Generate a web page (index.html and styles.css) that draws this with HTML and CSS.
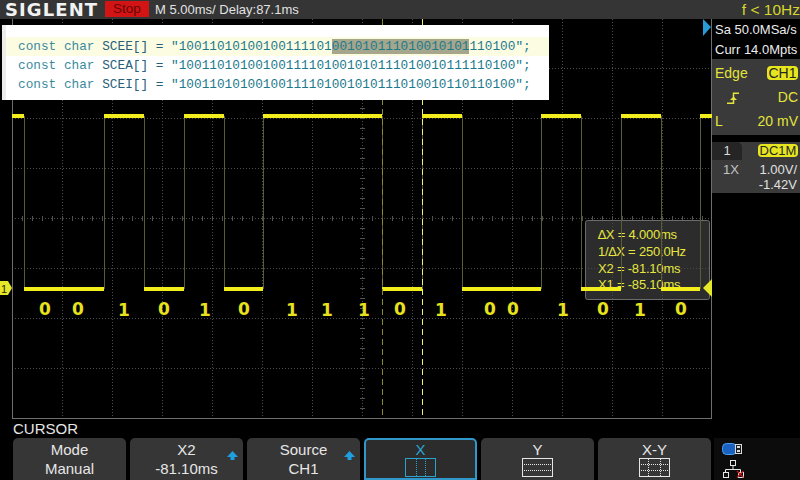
FILE: index.html
```html
<!DOCTYPE html>
<html>
<head>
<meta charset="utf-8">
<link rel="stylesheet" href="styles.css">
</head>
<body>
<div class="screen">
  <header class="topbar">
    <div class="logo">SIGLENT</div>
    <div class="stop">Stop</div>
    <div class="timebase">M 5.00ms/ Delay:87.1ms</div>
    <div class="freq">f &lt; 10Hz</div>
  </header>

  <div class="main">
    <div class="scope">
      <svg class="plot" width="712" height="400" viewBox="0 19 712 400" xmlns="http://www.w3.org/2000/svg">
        <g class="grid" fill="none">
          <path stroke="#4d4d4d" stroke-dasharray="1 2" d="M62.5 19V418M112.5 19V418M162.5 19V418M212.5 19V418M262.5 19V418M312.5 19V418M362.5 19V418M412.5 19V418M462.5 19V418M512.5 19V418M562.5 19V418M612.5 19V418M662.5 19V418"/>
          <path stroke="#4d4d4d" stroke-dasharray="1 2" d="M12 68.5H712M12 118.5H712M12 168.5H712M12 218.5H712M12 268.5H712M12 318.5H712M12 368.5H712"/>
          <path stroke="#525252" stroke-width="5" stroke-dasharray="1 9" d="M12 218.5H712"/>
          <path stroke="#525252" stroke-width="5" stroke-dasharray="1 9" d="M362.5 18V418"/>
          <path stroke="#6e6e6e" d="M12.5 19V418.5M12 418.5H712M711.5 19V418.5"/>
        </g>

        <rect x="585.5" y="220.5" width="124" height="79" rx="2" fill="#4a4a4a" fill-opacity="0.6" stroke="#6c6c6c"/>
        <g class="readout">
          <text x="598" y="239">∆X = 4.000ms</text>
          <text x="598" y="256">1/∆X = 250.0Hz</text>
          <text x="598" y="272.5">X2 = -81.10ms</text>
          <text x="598" y="289">X1 = -85.10ms</text>
        </g>

        <path fill="none" stroke="#5c5c34" d="M24.5 116V289M104.5 116V289M144.5 116V289M184.5 116V289M224.5 116V289M263.5 116V289M382.5 116V289M422.5 116V289M462.5 116V289M541.5 116V289M581.5 116V289M621.5 116V289M661.5 116V289M700.5 116V289"/>
        <path fill="none" stroke="#f2ee1e" stroke-width="4" d="M12 116H24M104 116H144M184 116H224M263 116H382M422 116H462M541 116H581M621 116H661M700 116H712M24 289H104M144 289H184M224 289H263M382 289H422M462 289H541M581 289H621M661 289H700"/>

        <path fill="none" stroke="#8a8a32" stroke-dasharray="6 4" d="M382.5 19V418"/>
        <path fill="none" stroke="#f0f070" stroke-dasharray="6 4" d="M422.5 19V418"/>

        <g class="bits">
          <text x="45" y="315">0</text>
          <text x="78" y="315">0</text>
          <text x="124" y="316">1</text>
          <text x="164" y="315">0</text>
          <text x="205" y="316">1</text>
          <text x="244" y="315">0</text>
          <text x="292" y="316">1</text>
          <text x="327" y="316">1</text>
          <text x="364" y="316">1</text>
          <text x="400" y="315">0</text>
          <text x="441" y="316">1</text>
          <text x="490" y="315">0</text>
          <text x="513" y="315">0</text>
          <text x="563" y="316">1</text>
          <text x="603" y="315">0</text>
          <text x="640" y="316">1</text>
          <text x="681" y="315">0</text>
        </g>

        <polygon points="0,281 8,281 12,288 8,295 0,295" fill="#e6e62a"/>
        <text class="gnd" x="1" y="292.5">1</text>
        <polygon points="703,288 712,279 712,297" fill="#e8e82a"/>
        <polygon points="703,19 711,27 703,36" fill="#2a9ad6"/>
      </svg>

      <div class="code">
        <div class="code-line current"><span class="kw">const char</span> <span class="id">SCEE[] =</span> <span class="str">"10011010100100111101<span class="sel">001010111010010101</span>110100";</span></div>
        <div class="code-line"><span class="kw">const char</span> <span class="id">SCEA[] =</span> <span class="str">"10011010100100111101001010111010010111110100";</span></div>
        <div class="code-line"><span class="kw">const char</span> <span class="id">SCEI[] =</span> <span class="str">"10011010100100111101001010111010010110110100";</span></div>
      </div>
    </div>

    <aside class="side">
      <div class="acq">
        <div>Sa 50.0MSa/s</div>
        <div>Curr 14.0Mpts</div>
      </div>
      <div class="trig">
        <div class="trig-row"><span>Edge</span><span class="badge ch">CH1</span></div>
        <div class="trig-row">
          <svg class="edge" width="12" height="12" viewBox="0 0 12 12"><path d="M0 11.25H6.5V1.25H12" fill="none" stroke="#e4e43c" stroke-width="1.5"/><polygon points="3,8 6.5,4.5 10,8" fill="#e4e43c"/></svg>
          <span>DC</span>
        </div>
        <div class="trig-row"><span>L</span><span>20 mV</span></div>
      </div>
      <div class="chan">
        <div class="chan-top"><span class="chan-num">1</span><span class="badge dc">DC1M</span></div>
        <div class="chan-row first"><span class="probe">1X</span><span>1.00V/</span></div>
        <div class="chan-row"><span></span><span>-1.42V</span></div>
      </div>
    </aside>
  </div>

  <footer class="bottom">
    <div class="menu">
      <div class="menu-title">CURSOR</div>
      <div class="buttons">
        <div class="btn"><div>Mode</div><div>Manual</div></div>
        <div class="btn"><div>X2</div><div>-81.10ms</div>
          <svg class="arrow" width="11" height="9" viewBox="0 0 11 9"><path d="M0 6L5.5 0L11 6H7.5V9H3.5V6Z" fill="#1e9fe0"/></svg>
        </div>
        <div class="btn"><div>Source</div><div>CH1</div>
          <svg class="arrow" width="11" height="9" viewBox="0 0 11 9"><path d="M0 6L5.5 0L11 6H7.5V9H3.5V6Z" fill="#1e9fe0"/></svg>
        </div>
        <div class="btn icon sel"><div class="glyph">X</div>
          <svg width="31" height="19" viewBox="0 0 31 19"><rect x="0.5" y="0.5" width="30" height="18" fill="none" stroke="#2aa3cf"/><path d="M11.5 1V18M20.5 1V18" stroke="#2aa3cf" stroke-dasharray="1 1"/></svg>
        </div>
        <div class="btn icon"><div class="glyph">Y</div>
          <svg width="31" height="19" viewBox="0 0 31 19"><rect x="0.5" y="0.5" width="30" height="18" fill="none" stroke="#e6e6e6"/><path d="M2 6.5H29M2 12.5H29" stroke="#e6e6e6" stroke-dasharray="1 1"/></svg>
        </div>
        <div class="btn icon"><div class="glyph">X-Y</div>
          <svg width="31" height="19" viewBox="0 0 31 19"><rect x="0.5" y="0.5" width="30" height="18" fill="none" stroke="#e6e6e6"/><path d="M9.5 1V18M21.5 1V18M2 6.5H29M2 12.5H29" stroke="#e6e6e6" stroke-dasharray="1 1"/></svg>
        </div>
      </div>
    </div>
    <div class="status">
      <svg width="20" height="12" viewBox="0 0 20 12"><rect x="0.5" y="0.5" width="14" height="11" rx="4" fill="#1b62c0" stroke="#4b9df0"/><rect x="13.5" y="1.5" width="6" height="9" fill="#1c1c1c" stroke="#dcdcdc"/><rect x="15" y="3" width="3" height="2" fill="#dcdcdc"/><rect x="15" y="7" width="3" height="2" fill="#dcdcdc"/></svg>
      <svg width="22" height="18" viewBox="0 0 22 18"><g fill="none" stroke="#e6e6e6"><rect x="8.5" y="0.5" width="5" height="5"/><path d="M11 6V9.5M3.5 9.5H18.5M3.5 9.5V12M18.5 9.5V12"/><rect x="1.5" y="12.5" width="5" height="5"/><rect x="16.5" y="12.5" width="5" height="5"/></g><path d="M15 11L21.5 17.5M21.5 11L15 17.5" stroke="#c41a1a" stroke-width="1.3"/></svg>
    </div>
  </footer>
</div>
</body>
</html>
```

FILE: styles.css
```css
* {
  box-sizing: border-box;
  margin: 0;
  padding: 0;
}

html, body {
  width: 800px;
  height: 480px;
  background: #000;
  overflow: hidden;
}

body {
  font-family: "Liberation Sans", Arial, sans-serif;
  color: #e6e6e6;
}

.screen {
  width: 800px;
  height: 480px;
  display: flex;
  flex-direction: column;
  background: #000;
}

/* ---------- top bar ---------- */
.topbar {
  height: 19px;
  flex: none;
  background: #353535;
  display: flex;
  align-items: flex-start;
  font-size: 13px;
  line-height: 19px;
}

.logo {
  width: 95px;
  margin-left: 5px;
  height: 19px;
  line-height: 20px;
  font-family: "DejaVu Sans", sans-serif;
  font-weight: bold;
  font-size: 18px;
  letter-spacing: 1.1px;
  color: #f2f2f2;
  white-space: nowrap;
}

.stop {
  width: 44px;
  height: 16px;
  margin-top: 1px;
  margin-left: 5px;
  line-height: 16px;
  text-align: center;
  background: #d31414;
  color: #6a0505;
  font-size: 13.5px;
}

.timebase {
  margin-left: 6px;
  color: #e2e2e2;
  white-space: nowrap;
}

.freq {
  margin-left: auto;
  color: #d6d62c;
  font-size: 15.5px;
  white-space: nowrap;
}

/* ---------- main area ---------- */
.main {
  display: flex;
  height: 400px;
  flex: none;
}

.scope {
  position: relative;
  width: 712px;
  height: 400px;
  flex: none;
}

.plot {
  display: block;
}

.readout text {
  font-family: "Liberation Sans", "DejaVu Sans", sans-serif;
  font-size: 13px;
  letter-spacing: -0.2px;
  fill: #e6e640;
}

.bits text {
  font-family: "DejaVu Sans", sans-serif;
  font-weight: bold;
  font-size: 17px;
  fill: #e8e21e;
  text-anchor: middle;
}

.gnd {
  font-family: "Liberation Sans", sans-serif;
  font-size: 11px;
  fill: #2a2a00;
}

/* code overlay */
.code {
  position: absolute;
  left: 2px;
  top: 6px;
  width: 547px;
  height: 75px;
  background: #ffffff;
  border-left: 4px solid #ececec;
  padding-top: 12px;
  font-family: "Liberation Mono", "DejaVu Sans Mono", monospace;
  font-size: 12.75px;
}

.code-line {
  height: 19px;
  line-height: 20px;
  padding-left: 12px;
  white-space: pre;
}

.code-line.current {
  background: #fcfce3;
}

.kw { color: #3a8a9e; }
.id { color: #26607a; }
.str { color: #1c7a8c; }
.sel { background: #a6a68c; }

/* ---------- side panel ---------- */
.side {
  width: 88px;
  height: 400px;
  flex: none;
  display: flex;
  flex-direction: column;
  font-size: 13px;
}

.acq {
  height: 40px;
  padding: 1px 0 0 3px;
  line-height: 20px;
  color: #ececec;
  white-space: nowrap;
}

.trig {
  height: 76px;
  padding: 1.5px 2px 0 3px;
  background: #3a3a3a;
  font-size: 14px;
  color: #e4e43c;
}

.trig-row {
  height: 24px;
  line-height: 24px;
  display: flex;
  justify-content: space-between;
  align-items: center;
}

.edge {
  margin-left: 12px;
  margin-top: 2px;
  display: block;
}

.badge {
  background: #e6e61e;
  color: #262626;
  border-radius: 4px;
  text-align: center;
}

.badge.ch {
  width: 31px;
  height: 14px;
  line-height: 14px;
  font-size: 14px;
}

.chan {
  margin-top: 7px;
  height: 51px;
  background: #3a3a3a;
  color: #e0e0e0;
}

.chan-top {
  height: 18px;
  display: flex;
  justify-content: space-between;
}

.chan-num {
  width: 30px;
  background: #252525;
  border-top-right-radius: 5px;
  text-align: center;
  line-height: 18px;
  color: #dcdcdc;
}

.badge.dc {
  width: 40px;
  height: 13px;
  margin-top: 2px;
  margin-right: 2px;
  line-height: 13px;
  font-size: 13px;
}

.chan-row {
  display: flex;
  justify-content: space-between;
  line-height: 15px;
  padding: 0 3px 0 11px;
}

.chan-row.first {
  margin-top: 2px;
}

.probe {
  color: #c4c4c4;
}

/* ---------- bottom menu ---------- */
.bottom {
  height: 61px;
  flex: none;
  display: flex;
}

.menu {
  width: 714px;
  padding-left: 13px;
}

.menu-title {
  height: 19px;
  line-height: 19px;
  font-size: 15px;
  color: #e6e6e6;
}

.buttons {
  display: flex;
  gap: 4px;
}

.btn {
  position: relative;
  width: 113px;
  height: 42px;
  padding-top: 2px;
  background: #363636;
  border-radius: 5px 5px 0 0;
  text-align: center;
  font-size: 15px;
  line-height: 19px;
  color: #e6e6e6;
}

.btn.icon {
  padding-top: 3px;
  display: flex;
  flex-direction: column;
  align-items: center;
}

.btn.icon .glyph {
  height: 17px;
  line-height: 17px;
}

.btn.icon svg {
  display: block;
}

.btn.sel {
  border: 2px solid #2f97c9;
  background: #2c2c2c;
  color: #2aa5d2;
  padding-top: 1px;
}

.arrow {
  position: absolute;
  right: 5px;
  top: 13px;
}

.status {
  flex: 1;
  margin-top: 19px;
  padding: 5px 0 0 8px;
  background: #0c0c0c;
  display: flex;
  flex-direction: column;
  gap: 5px;
}

.status svg {
  display: block;
}
```
